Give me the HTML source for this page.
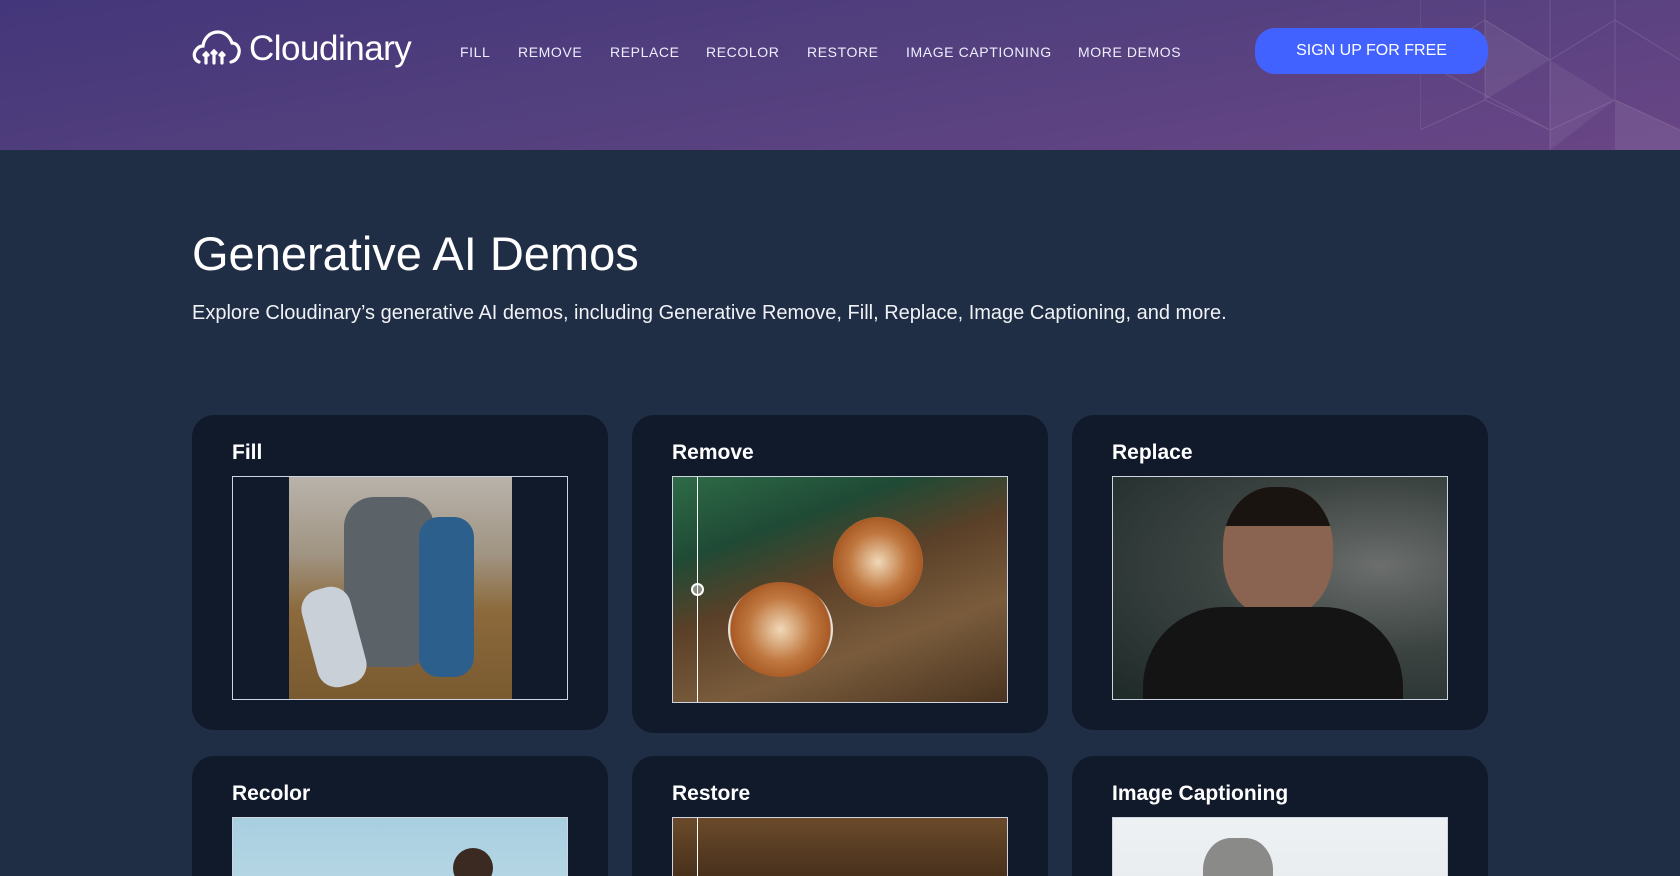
<!DOCTYPE html>
<html><head><meta charset="utf-8"><style>
*{margin:0;padding:0;box-sizing:border-box}
html,body{width:1680px;height:876px;overflow:hidden}
body{background:#1f2d45;font-family:"Liberation Sans",sans-serif;color:#fff;position:relative}
.hdr{position:absolute;left:0;top:0;width:1680px;height:150px;background:linear-gradient(170deg,#43367a 0%,#54407e 50%,#6a4686 100%);overflow:hidden}
.nav{position:absolute;top:44px;font-size:14px;letter-spacing:.6px;color:#eef}
.btn{position:absolute;left:1255px;top:28px;width:233px;height:46px;border-radius:20px;background:#4262ff;font-size:16px;text-align:center;line-height:46px;color:#fff}
h1{position:absolute;left:192px;top:226px;font-size:47px;font-weight:400}
.sub{position:absolute;left:192px;top:302px;font-size:20px;color:#f0f2f6}
.card{position:absolute;width:416px;height:315px;background:#111a2b;border-radius:22px}
.card h3{position:absolute;left:40px;top:26px;font-size:21px;font-weight:700}
.img{position:absolute;left:40px;top:61px;width:336px;height:224px;border:1px solid #cfd5e0;overflow:hidden}
</style></head><body>
<div class="hdr">
<svg style="position:absolute;left:1420px;top:0" width="260" height="150" viewBox="0 0 260 150" fill="none" stroke="rgba(255,255,255,.12)">
<path d="M0 0V130L65 100 130 130 195 100 260 130M65 0V100M130 0V150M195 0V100M0 60L65 20 130 60 195 20 260 60M65 20L130 60M0 60L130 130"/>
<polygon points="65,20 130,60 65,100" fill="rgba(255,255,255,.07)" stroke="none"/>
<polygon points="130,60 195,100 130,150" fill="rgba(255,255,255,.06)" stroke="none"/>
<polygon points="195,100 260,130 260,150 195,150" fill="rgba(255,255,255,.08)" stroke="none"/>
</svg>
<svg style="position:absolute;left:191px;top:29px" width="50" height="36" viewBox="0 0 50 36" fill="none" stroke="#fff" stroke-width="3.2" stroke-linecap="round">
<path d="M8 33C3 31 2 25 5 21 7 18 10 17 12 17 13 9 19 3 27 3 34 3 39 8 41 14 46 14 49 19 48 24 47 29 44 32 40 33"/>
<path d="M15 34V24M13 26l2-2 2 2M23 34V22M21 24l2-2 2 2M31 34V24M29 26l2-2 2 2"/>
</svg>
<div style="position:absolute;left:249px;top:29px;font-size:35px;font-weight:400;letter-spacing:-.5px">Cloudinary</div>
<div class="nav" style="left:460px">FILL</div>
<div class="nav" style="left:518px">REMOVE</div>
<div class="nav" style="left:610px">REPLACE</div>
<div class="nav" style="left:706px">RECOLOR</div>
<div class="nav" style="left:807px">RESTORE</div>
<div class="nav" style="left:906px">IMAGE CAPTIONING</div>
<div class="nav" style="left:1078px">MORE DEMOS</div>
<div class="btn">SIGN UP FOR FREE</div>
</div>
<h1>Generative AI Demos</h1>
<div class="sub">Explore Cloudinary’s generative AI demos, including Generative Remove, Fill, Replace, Image Captioning, and more.</div>

<div class="card" style="left:192px;top:415px"><h3>Fill</h3>
<div class="img" style="background:#111a2b"><div style="position:absolute;left:56px;top:0;width:223px;height:100%;background:linear-gradient(180deg,#b9b3ab 0%,#a09482 35%,#8c6a3c 60%,#7a5a30 100%)">
<div style="position:absolute;left:55px;top:20px;width:90px;height:170px;border-radius:30px;background:#5b6268"></div>
<div style="position:absolute;left:130px;top:40px;width:55px;height:160px;border-radius:20px;background:#2d5f8c"></div>
<div style="position:absolute;left:20px;top:110px;width:50px;height:100px;border-radius:20px;background:#c9d0d8;transform:rotate(-15deg)"></div>
</div></div></div>

<div class="card" style="left:632px;top:415px;height:318px"><h3>Remove</h3>
<div class="img" style="height:227px;background:linear-gradient(160deg,#2e6b47 0%,#1f4a35 25%,#5a4028 45%,#7a5c3c 70%,#4a3420 100%)">
<div style="position:absolute;left:55px;top:105px;width:105px;height:95px;border-radius:50%;background:radial-gradient(circle,#f0d8b8 0%,#c07840 45%,#a85a25 70%,#e8e4de 72%)"></div>
<div style="position:absolute;left:160px;top:40px;width:90px;height:90px;border-radius:50%;background:radial-gradient(circle,#f0d8b8 0%,#c07840 45%,#a85a25 70%,#e8e4de 72%)"></div>
<div style="position:absolute;left:24px;top:0;width:1px;height:100%;background:#fff"></div>
<div style="position:absolute;left:18px;top:106px;width:13px;height:13px;border-radius:50%;border:2px solid #fff;background:rgba(255,255,255,.4)"></div>
</div></div>

<div class="card" style="left:1072px;top:415px"><h3>Replace</h3>
<div class="img" style="background:radial-gradient(ellipse at 80% 40%,#6b6e6c 0%,#3c4442 45%,#1e2a28 100%)">
<div style="position:absolute;left:110px;top:10px;width:110px;height:130px;border-radius:45%;background:linear-gradient(#1a1410 30%,#8a6450 30%)"></div>
<div style="position:absolute;left:30px;top:130px;width:260px;height:120px;border-radius:80px 80px 0 0;background:#141414"></div>
</div></div>

<div class="card" style="left:192px;top:756px"><h3>Recolor</h3>
<div class="img" style="background:linear-gradient(180deg,#a8cfe0,#d8e8ee)"><div style="position:absolute;left:220px;top:30px;width:40px;height:40px;border-radius:50%;background:#3a2a22"></div></div></div>
<div class="card" style="left:632px;top:756px"><h3>Restore</h3>
<div class="img" style="background:linear-gradient(180deg,#6a4a2a,#2a1a10 50%,#4a3a2a)"><div style="position:absolute;left:24px;top:0;width:1px;height:100%;background:#fff"></div></div></div>
<div class="card" style="left:1072px;top:756px"><h3>Image Captioning</h3>
<div class="img" style="background:linear-gradient(180deg,#eef1f3,#dde2e4)"><div style="position:absolute;left:90px;top:20px;width:70px;height:80px;border-radius:40% 40% 0 0;background:#8a8a88"></div></div></div>
</body></html>
